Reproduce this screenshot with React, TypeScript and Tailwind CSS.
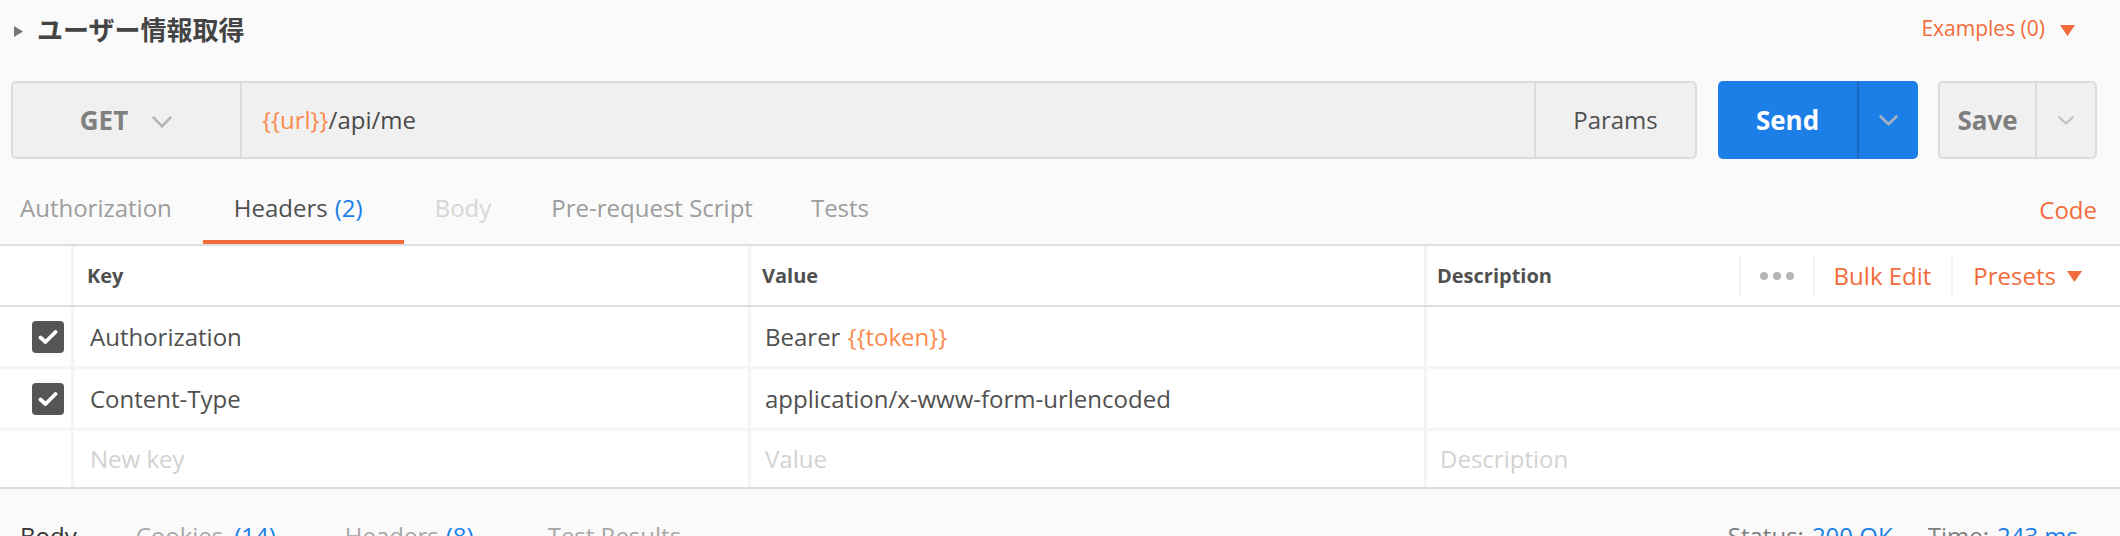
import React from "react";

function Chevron({ w, h, color, sw }: { w: number; h: number; color: string; sw: number }) {
  return (
    <svg width={w} height={h} viewBox={`0 0 ${w} ${h}`}>
      <polyline
        points={`${sw / 2 + 0.5},${sw / 2 + 0.5} ${w / 2},${h - sw / 2 - 0.5} ${w - sw / 2 - 0.5},${sw / 2 + 0.5}`}
        fill="none"
        stroke={color}
        strokeWidth={sw}
      />
    </svg>
  );
}

function DownTri({ color }: { color: string }) {
  return (
    <svg width="15" height="11" viewBox="0 0 15 11">
      <polygon points="0,0 15,0 7.5,11" fill={color} />
    </svg>
  );
}

function Check() {
  return (
    <div className="w-[32px] h-[32px] rounded-[4px] bg-[#555555] flex items-center justify-center">
      <svg width="20" height="16" viewBox="0 0 20 16">
        <path d="M2.5 8.5 L7.5 13 L17.5 3" stroke="#ffffff" strokeWidth="3.8" fill="none" strokeLinecap="round" strokeLinejoin="round" />
      </svg>
    </div>
  );
}

export default function App() {
  return (
    <div className="w-[2120px] h-[536px] overflow-hidden bg-[#fafafa] font-['Open_Sans','Noto_Sans_CJK_JP',sans-serif] text-[#505050]">
      {/* Title row */}
      <div className="h-[58px] flex items-center justify-between pl-[14px] pr-[45px]">
        <div className="flex items-center">
          <svg width="9" height="11" viewBox="0 0 9 11" className="mr-[14px] mt-[4px]">
            <polygon points="0,0 9,5.5 0,11" fill="#777777" />
          </svg>
          <span className="text-[26px] font-bold text-[#444444] leading-none font-['Noto_Sans_CJK_JP',sans-serif]">ユーザー情報取得</span>
        </div>
        <div className="flex items-center text-[21px] text-[#f26b3a]">
          <span>Examples (0)</span>
          <span className="ml-[15px] mt-[2px]">
            <DownTri color="#f26b3a" />
          </span>
        </div>
      </div>

      {/* URL row */}
      <div className="mt-[23px] h-[78px] flex pl-[11px] pr-[23px]">
        <div className="flex-1 flex border-2 border-[#dcdcdc] rounded-[5px] bg-[#f0f0f0]">
          <div className="w-[229px] border-r-2 border-[#dcdcdc] flex items-center justify-center">
            <span className="text-[26px] font-bold text-[#808080] leading-none">GET</span>
            <span className="ml-[23px] mt-[2px]">
              <Chevron w={22} h={13} color="#b5b5b5" sw={2.6} />
            </span>
          </div>
          <div className="flex-1 flex items-center pl-[20px] text-[24px]">
            <span className="text-[#fb8a4c]">{"{{url}}"}</span>
            <span className="text-[#4a4a4a]">/api/me</span>
          </div>
          <div className="w-[161px] border-l-2 border-[#dcdcdc] flex items-center justify-center text-[24px] text-[#505050]">
            Params
          </div>
        </div>
        <div className="ml-[21px] w-[200px] flex rounded-[5px] bg-[#1c7fe8]">
          <div className="w-[139px] flex items-center justify-center text-[26px] font-bold text-white">Send</div>
          <div className="flex-1 border-l-2 border-[#1766c4] flex items-center justify-center">
            <Chevron w={21} h={12} color="#a9b3bd" sw={2.6} />
          </div>
        </div>
        <div className="ml-[20px] w-[159px] flex border-2 border-[#dcdcdc] rounded-[5px] bg-[#f0f0f0]">
          <div className="w-[97px] border-r-2 border-[#dcdcdc] flex items-center justify-center text-[26px] font-bold text-[#7e7e7e]">
            Save
          </div>
          <div className="flex-1 flex items-center justify-center">
            <Chevron w={18} h={10} color="#c2c2c2" sw={2.2} />
          </div>
        </div>
      </div>

      {/* Request tabs */}
      <div className="h-[87px] flex items-end justify-between border-b-2 border-[#dedede] pr-[23px]">
        <div className="flex items-end text-[24px]">
          <div className="h-[64px] flex items-center pb-[4px] border-b-4 border-transparent pl-[20px] pr-[31px] text-[#9d9d9d]">Authorization</div>
          <div className="h-[64px] flex items-center pb-[4px] border-b-4 border-[#f26b3a] pl-[31px] pr-[41px] text-[#505050]">
            Headers<span className="ml-[7px] text-[#1a7fe8]">(2)</span>
          </div>
          <div className="h-[64px] flex items-center pb-[4px] border-b-4 border-transparent pl-[31px] pr-[30px] text-[#d6d6d6]">Body</div>
          <div className="h-[64px] flex items-center pb-[4px] border-b-4 border-transparent pl-[30px] pr-[30px] text-[#9d9d9d]">Pre-request Script</div>
          <div className="h-[64px] flex items-center pb-[4px] border-b-4 border-transparent pl-[28px] pr-[30px] text-[#9d9d9d]">Tests</div>
        </div>
        <div className="h-[64px] flex items-center border-b-4 border-transparent text-[24px] text-[#f26b3a]">Code</div>
      </div>

      {/* Headers table */}
      <div className="bg-white">
        <div className="h-[61px] flex border-b-2 border-[#dedede] text-[20px] font-bold text-[#505050]">
          <div className="w-[71px]"></div>
          <div className="w-[677px] border-l-[3px] border-[#f4f4f4] flex items-center pl-[13px]">Key</div>
          <div className="w-[676px] border-l-[3px] border-[#f4f4f4] flex items-center pl-[11px]">Value</div>
          <div className="flex-1 border-l-[3px] border-[#f4f4f4] flex items-center pl-[10px]">
            <span className="flex-1">Description</span>
            <div className="flex items-center h-[41px] font-normal text-[24px] pr-[38px]">
              <div className="h-full w-[74px] border-l-2 border-[#f2f2f2] flex items-center justify-center gap-[5px]">
                <span className="w-[8px] h-[8px] rounded-full bg-[#b5b5b5]"></span>
                <span className="w-[8px] h-[8px] rounded-full bg-[#b5b5b5]"></span>
                <span className="w-[8px] h-[8px] rounded-full bg-[#b5b5b5]"></span>
              </div>
              <div className="h-full border-l-2 border-[#f2f2f2] flex items-center pl-[19px] pr-[20px] text-[#f26b3a]">Bulk Edit</div>
              <div className="h-full border-l-2 border-[#f2f2f2] flex items-center pl-[20px] text-[#f26b3a]">
                Presets
                <span className="ml-[11px] mt-[2px]">
                  <DownTri color="#f26b3a" />
                </span>
              </div>
            </div>
          </div>
        </div>

        <div className="h-[62px] flex border-b-[3px] border-[#f5f5f5] text-[24px] text-[#505050]">
          <div className="w-[71px] flex items-center pl-[32px]">
            <Check />
          </div>
          <div className="w-[677px] border-l-[3px] border-[#f4f4f4] flex items-center pl-[16px]">Authorization</div>
          <div className="w-[676px] border-l-[3px] border-[#f4f4f4] flex items-center pl-[14px]">
            Bearer<span className="ml-[7px] text-[#fb8a4c]">{"{{token}}"}</span>
          </div>
          <div className="flex-1 border-l-[3px] border-[#f4f4f4]"></div>
        </div>

        <div className="h-[62px] flex border-b-[3px] border-[#f5f5f5] text-[24px] text-[#505050]">
          <div className="w-[71px] flex items-center pl-[32px]">
            <Check />
          </div>
          <div className="w-[677px] border-l-[3px] border-[#f4f4f4] flex items-center pl-[16px]">Content-Type</div>
          <div className="w-[676px] border-l-[3px] border-[#f4f4f4] flex items-center pl-[14px]">application/x-www-form-urlencoded</div>
          <div className="flex-1 border-l-[3px] border-[#f4f4f4]"></div>
        </div>

        <div className="h-[58px] flex border-b-2 border-[#dcdcdc] text-[24px] text-[#d2d2d2]">
          <div className="w-[71px]"></div>
          <div className="w-[677px] border-l-[3px] border-[#f4f4f4] flex items-center pl-[16px]">New key</div>
          <div className="w-[676px] border-l-[3px] border-[#f4f4f4] flex items-center pl-[14px]">Value</div>
          <div className="flex-1 border-l-[3px] border-[#f4f4f4] flex items-center pl-[13px]">Description</div>
        </div>
      </div>

      {/* Response tabs */}
      <div className="pt-[29px] flex justify-between pl-[20px] pr-[42px] text-[24px] leading-normal">
        <div className="flex">
          <span className="text-[#333333]">Body</span>
          <span className="ml-[59px] text-[#a8a8a8]">
            Cookies<span className="ml-[11px] text-[#1a7fe8]">(14)</span>
          </span>
          <span className="ml-[69px] text-[#a8a8a8]">
            Headers<span className="ml-[7px] text-[#1a7fe8]">(8)</span>
          </span>
          <span className="ml-[74px] text-[#a8a8a8]">Test Results</span>
        </div>
        <div className="flex">
          <span className="text-[#808080]">
            Status:<span className="ml-[8px] text-[#1a7fe8]">200 OK</span>
          </span>
          <span className="ml-[35px] text-[#808080]">
            Time:<span className="ml-[8px] text-[#1a7fe8]">243 ms</span>
          </span>
        </div>
      </div>
    </div>
  );
}
